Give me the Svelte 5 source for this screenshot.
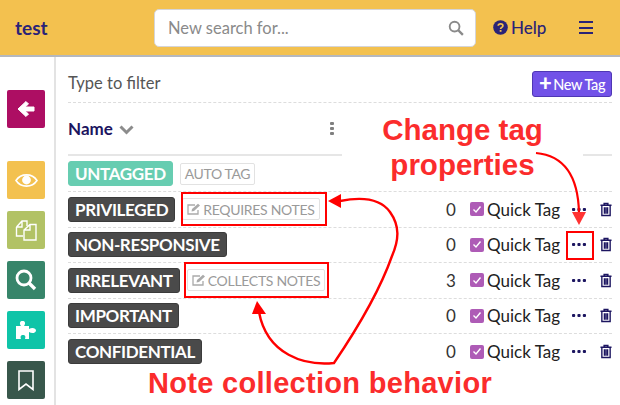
<script>
  const sideItems = [
    { cls: 'back', icon: 'back' },
    { cls: 'eye', icon: 'eye' },
    { cls: 'copy', icon: 'copy' },
    { cls: 'find', icon: 'find' },
    { cls: 'puzzle', icon: 'puzzle' },
    { cls: 'mark', icon: 'mark' }
  ];
  const tags = [
    { name: 'PRIVILEGED', note: 'REQUIRES NOTES', count: 0 },
    { name: 'NON-RESPONSIVE', count: 0 },
    { name: 'IRRELEVANT', note: 'COLLECTS NOTES', count: 3 },
    { name: 'IMPORTANT', count: 0 },
    { name: 'CONFIDENTIAL', count: 0 }
  ];
</script>

<div class="page">
  <header class="top">
    <div class="brand">test</div>
    <div class="search">
      <span>New search for...</span>
      <svg width="16" height="16" viewBox="0 0 17 17"><circle cx="7" cy="7" r="5.2" fill="none" stroke="#8a8a8a" stroke-width="2"/><path d="M10.8 10.8 L15.8 15.8" stroke="#8a8a8a" stroke-width="2.4"/></svg>
    </div>
    <div class="help">
      <svg width="15" height="15" viewBox="0 0 15 15"><circle cx="7.5" cy="7.5" r="7.3" fill="#2a2377"/><path d="M5.2 5.8 C5.4 3.3 9.9 3.3 9.9 5.8 C9.9 7.4 7.6 7.3 7.6 9" fill="none" stroke="#f3c14f" stroke-width="1.7"/><rect x="6.7" y="10" width="1.8" height="1.8" fill="#f3c14f"/></svg>
      <span>Help</span>
    </div>
    <div class="burger"><i></i><i></i><i></i></div>
  </header>

  <div class="body">
    <nav class="side">
      {#each sideItems as item}
        <div class="tile {item.cls}">
          {#if item.icon === 'back'}
            <svg width="20" height="20" viewBox="0 0 20 20"><path d="M10 2.5 L12.5 5 L9 8 H18 V12 H9 L12.5 15 L10 17.5 L2 10 Z" fill="#fff" stroke="#fff" stroke-linejoin="round"/></svg>
          {:else if item.icon === 'eye'}
            <svg width="23" height="15" viewBox="0 0 23 15"><path d="M1 7.5 C6 0 17 0 22 7.5 C17 15 6 15 1 7.5 Z" fill="none" stroke="#fff" stroke-width="1.6"/><circle cx="11.5" cy="7" r="4.4" fill="#fff"/></svg>
          {:else if item.icon === 'copy'}
            <svg width="23" height="23" viewBox="0 0 23 23"><path d="M1.5 8 L7 2 H12 V7 M1.5 8 V17 H8 M1.5 8 H7 V2" fill="none" stroke="#fff" stroke-width="1.4"/><path d="M9 11 L15 5.5 H21 V21 H9 Z M9 11 H15 V5.5" fill="#b2c265" stroke="#fff" stroke-width="1.4"/></svg>
          {:else if item.icon === 'find'}
            <svg width="22" height="22" viewBox="0 0 22 22"><circle cx="9" cy="9" r="7" fill="none" stroke="#fff" stroke-width="2.8"/><path d="M14 14 L20 20" stroke="#fff" stroke-width="3.4"/></svg>
          {:else if item.icon === 'puzzle'}
            <svg width="22" height="20" viewBox="0 0 22 20"><path d="M1 6 H6 C4 3 5 1 7.5 1 C10 1 11 3 9 6 H14 V9 C17 7 21 8 21 10.5 C21 13 17 14 14 12 V19 H10 C11 16 10 15 8 15 C6 15 5 16 6 19 H1 Z" fill="#fff"/></svg>
          {:else}
            <svg width="16" height="21" viewBox="0 0 16 21"><path d="M1 1 H15 V19.5 L8 14 L1 19.5 Z" fill="none" stroke="#fff" stroke-width="1.6"/></svg>
          {/if}
        </div>
      {/each}
    </nav>

    <main class="panel">
      <div class="filter">
        <span>Type to filter</span>
        <button class="new"><b>+</b>New Tag</button>
      </div>
      <div class="head">
        <span class="name">Name</span>
        <svg class="chev" width="15" height="10" viewBox="0 0 15 10"><path d="M1.5 1.5 L7.5 7.5 L13.5 1.5" fill="none" stroke="#8c8c8c" stroke-width="3"/></svg>
        <span class="kebab"><i></i><i></i><i></i></span>
      </div>
      <div class="row first">
        <span class="tag green">UNTAGGED</span>
        <span class="auto">AUTO TAG</span>
      </div>
      {#each tags as t}
        <div class="row">
          <div class="left">
            <span class="tag">{t.name}</span>
            {#if t.note}
              <span class="note">
                <svg width="14" height="12" viewBox="0 0 14 12"><path d="M11 7 V11 H1 V2 H8" fill="none" stroke="#aaa" stroke-width="1.3"/><path d="M4.5 8.5 L5 6 L11 .8 L13 2.6 L7 8 Z" fill="#aaa"/></svg>
                {t.note}
              </span>
            {/if}
          </div>
          <span class="count">{t.count}</span>
          <span class="check"><svg width="10" height="9" viewBox="0 0 10 9"><path d="M1.5 4.5 L4 7 L8.5 1.5" fill="none" stroke="#fff" stroke-width="1.4"/></svg></span>
          <span class="quick">Quick Tag</span>
          <svg class="dots" width="14" height="3" viewBox="0 0 14 3"><rect x="0" y="0" width="3.2" height="3" rx="1" /><rect x="5.4" y="0" width="3.2" height="3" rx="1" /><rect x="10.8" y="0" width="3.2" height="3" rx="1" /></svg>
          <svg class="trash" width="12" height="15" viewBox="0 0 13 15"><path d="M.5 3 H12.5 M4.5 3 V1 H8.5 V3" fill="none" stroke="#1c1560" stroke-width="1.6"/><path d="M2 3 V14 H11 V3 M4.8 5 V12 M6.5 5 V12 M8.2 5 V12" fill="none" stroke="#1c1560" stroke-width="1.5"/></svg>
        </div>
      {/each}
    </main>
  </div>

  <div class="marks">
    <div class="label top1">Change tag<br />properties</div>
    <div class="label bottom1">Note collection behavior</div>
    <span class="box b1"></span>
    <span class="box b2"></span>
    <span class="box b3"></span>
    <svg width="620" height="405" viewBox="0 0 620 405">
      <path d="M536 153 C558 155 578 168 579 213" fill="none" stroke="#f00" stroke-width="2.2"/>
      <path d="M572 212 H586 L579 225 Z" fill="#f33"/>
      <path d="M340 201 C360 197 380 198 390 212 C400 226 399 240 392 256 C380 290 355 332 334 363 C305 366 267 355 259 312" fill="none" stroke="#f00" stroke-width="2.4"/>
      <path d="M328 201 L341 194 L341 208 Z" fill="#f00"/>
      <path d="M252 314 L266 314 L257 301 Z" fill="#f00"/>
    </svg>
  </div>
</div>

<style>
  :global(body) {
    margin: 0;
    background: #fff;
  }
  .page {
    position: relative;
    width: 620px;
    height: 405px;
    overflow: hidden;
    font-family: Lato, "Open Sans", sans-serif;
    color: #333;
  }
  .top {
    height: 55px;
    border-bottom: 2px solid #b4b8bf;
    background: #f3c14f;
    display: flex;
    align-items: center;
    padding-left: 15px;
    color: #2a2377;
  }
  .brand {
    font-size: 19px;
    font-weight: 700;
    width: 139px;
  }
  .search {
    width: 322px;
    height: 38px;
    box-sizing: border-box;
    background: #fff;
    border: 1px solid #d5d5d8;
    border-radius: 5px;
    display: flex;
    align-items: center;
    justify-content: space-between;
    padding: 0 11px 0 13px;
    font-size: 16.5px;
    color: #8a8a8a;
  }
  .help {
    margin-left: 17px;
    display: flex;
    align-items: center;
    gap: 3px;
    font-size: 17px;
    font-weight: 500;
  }
  .burger {
    margin-left: 33px;
    display: flex;
    flex-direction: column;
    gap: 3.5px;
  }
  .burger i {
    display: block;
    width: 14px;
    height: 2px;
    background: #2a2377;
  }
  .body {
    display: flex;
    height: 348px;
  }
  .side {
    border-right: 2px solid #e3e3e3;
    flex: none;
    padding: 33px 0 0 7px;
    width: 47px;
  }
  .tile {
    width: 38px;
    height: 38px;
    border-radius: 2px;
    display: flex;
    align-items: center;
    justify-content: center;
    margin-bottom: 12px;
  }
  .back { background: #ad0e63; margin-bottom: 33px; }
  .eye { background: #f3c14f; }
  .copy { background: #b2c265; }
  .find { background: #37856a; }
  .puzzle { background: #0fc4a8; }
  .mark { background: #38574b; }
  .panel {
    flex: 1;
    padding: 0 8px 0 12px;
    min-width: 0;
  }
  .filter {
    height: 39px;
    padding-top: 6px;
    border-bottom: 1px dashed #ddd;
    display: flex;
    align-items: center;
    justify-content: space-between;
    font-size: 16.5px;
    color: #555;
  }
  .new {
    height: 26px;
    width: 80px;
    margin-top: 3px;
    padding: 0;
    border: 1px solid #4f37b4;
    border-radius: 3px;
    background: #7252e8;
    color: #fff;
    font: 500 14.5px Lato, sans-serif;
    letter-spacing: -0.4px;
    white-space: nowrap;
  }
  .new b {
    font-size: 22px;
    font-weight: 900;
    line-height: 14px;
    margin-right: 2px;
    vertical-align: -1px;
  }
  .head {
    height: 51px;
    border-bottom: 2px solid #e6e6e6;
    display: flex;
    align-items: center;
    position: relative;
  }
  .name {
    font-size: 17px;
    font-weight: 700;
    color: #1c1560;
  }
  .chev {
    margin-left: 6px;
    margin-top: 2px;
  }
  .kebab {
    position: absolute;
    left: 262px;
    top: 19px;
    display: flex;
    flex-direction: column;
    gap: 2px;
  }
  .kebab i {
    width: 3.5px;
    height: 3px;
    background: #808080;
    border-radius: 1px;
  }
  .row {
    height: 35.5px;
    box-sizing: border-box;
    border-bottom: 1px dashed #ddd;
    display: flex;
    align-items: center;
  }
  .row.first {
    height: 36px;
    gap: 7px;
  }
  .row:last-child {
    border-bottom: 0;
  }
  .left {
    flex: none;
    width: 378px;
    display: flex;
    align-items: center;
    gap: 7px;
  }
  .tag {
    display: inline-block;
    height: 25px;
    line-height: 24px;
    padding: 0 6px;
    background: #4a4a4a;
    border: 1px solid #3b3b3b;
    box-sizing: border-box;
    border-radius: 3px;
    color: #fff;
    font-size: 17px;
    font-weight: 700;
    letter-spacing: -0.35px;
    white-space: nowrap;
  }
  .tag.green {
    background: #67cdb1;
    border-color: #67cdb1;
  }
  .auto, .note {
    display: inline-flex;
    align-items: center;
    height: 22px;
    box-sizing: border-box;
    border: 1px solid #e2e2e2;
    border-radius: 2px;
    font-size: 14px;
    color: #9a9a9a;
    white-space: nowrap;
    padding: 0 4px;
  }
  .auto {
    letter-spacing: -0.4px;
  }
  .note {
    gap: 2px;
    letter-spacing: -0.3px;
  }
  .count {
    font-size: 17px;
    width: 10px;
    margin-right: 14px;
    color: #333;
  }
  .check {
    width: 14px;
    height: 14px;
    border-radius: 2px;
    background: #ae5bb6;
    display: flex;
    align-items: center;
    justify-content: center;
    margin-right: 3px;
    flex: none;
  }
  .quick {
    font-size: 17px;
    color: #222;
    width: 72px;
    flex: none;
    white-space: nowrap;
  }
  .dots {
    margin-left: 13px;
    flex: none;
    fill: #1c1560;
  }
  .trash {
    margin-left: 14px;
    flex: none;
  }
  .marks {
    position: absolute;
    inset: 0;
    pointer-events: none;
  }
  .marks svg {
    position: absolute;
    left: 0;
    top: 0;
  }
  .label {
    position: absolute;
    font-family: "Liberation Sans", Arial, sans-serif;
    font-weight: 700;
    color: #fb2c2c;
    text-align: center;
    white-space: nowrap;
  }
  .top1 {
    left: 342px;
    top: 105px;
    width: 241px;
    height: 77px;
    padding-top: 7px;
    background: #fff;
    font-size: 29.5px;
    line-height: 35px;
  }
  .bottom1 {
    left: 148px;
    top: 365px;
    font-size: 29px;
    letter-spacing: 0.3px;
    line-height: 36px;
  }
  .box {
    position: absolute;
    box-sizing: border-box;
    border: 2px solid #f00;
  }
  .b1 { left: 181px; top: 192px; width: 146px; height: 34px; }
  .b2 { left: 184px; top: 262px; width: 145px; height: 36px; }
  .b3 { left: 566px; top: 231px; width: 28px; height: 29px; }
</style>
